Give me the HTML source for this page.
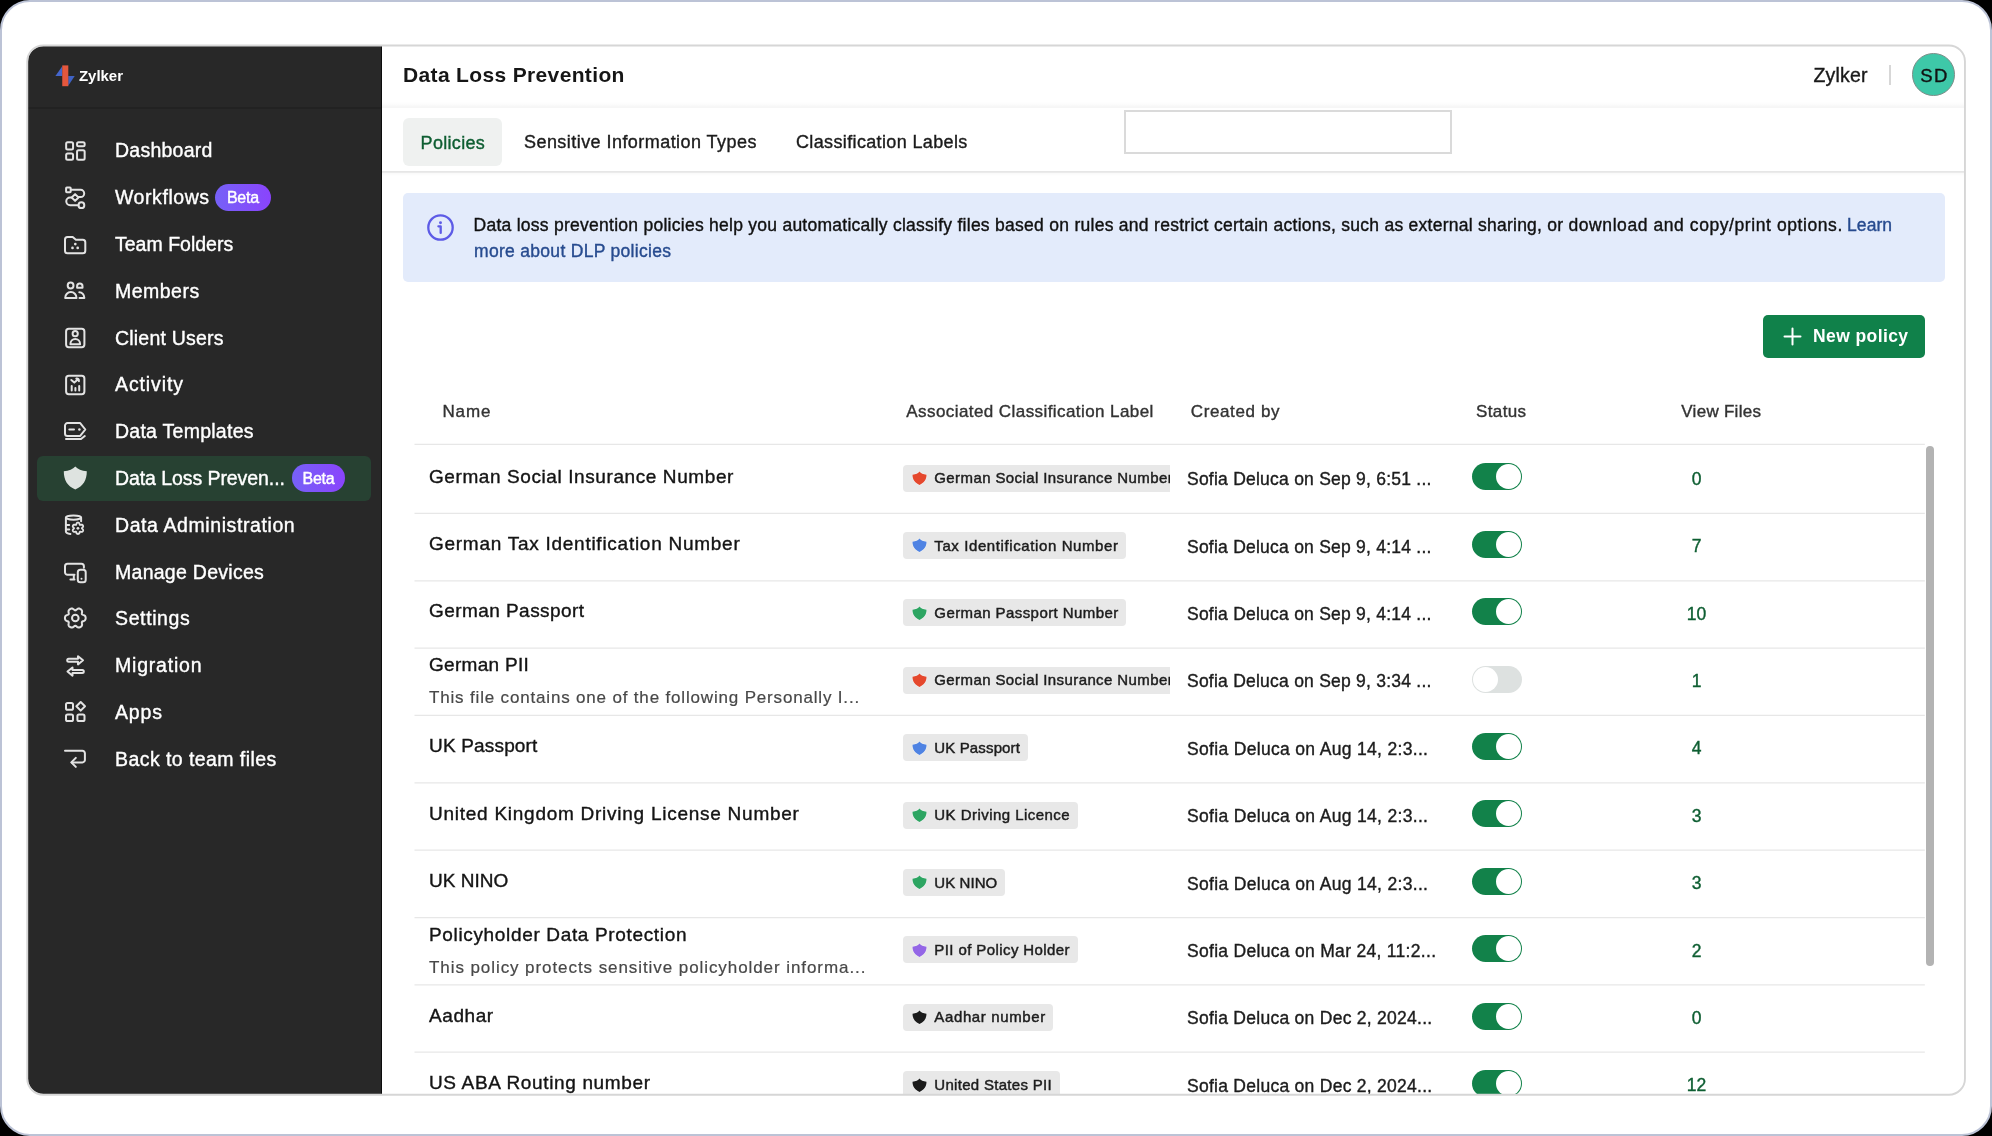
<!DOCTYPE html>
<html lang="en"><head><meta charset="utf-8"><title>Data Loss Prevention</title>
<style>
*{box-sizing:border-box;margin:0;padding:0}
html,body{width:1992px;height:1136px;overflow:hidden;background:#000}
body{font-family:"Liberation Sans",sans-serif;color:#1a1a1a;position:relative}
.frame{position:absolute;left:0;top:0;width:1992px;height:1136px;background:#fff;border:2px solid #bcc3d6;border-radius:30px;overflow:hidden}
.win{position:absolute;left:26px;top:44px;width:1937px;height:1048px;border:0;border-radius:15.5px;overflow:hidden;background:#fff}
.pg{will-change:transform;position:absolute;left:-28px;top:-46px;width:1992px;height:1136px}
.pg div{position:absolute;white-space:nowrap}
.side{left:28px;top:45px;width:353.5px;height:1051px;background:#282828}
.main{left:381.5px;top:45px;width:1584px;height:1051px;background:#fff}
/* sidebar */
.logo{left:55.2px;top:63.8px;width:20px;height:23px}
.brand{color:#fff}
.sidediv{left:28px;top:107px;width:353.5px;height:1.5px;background:#222}
.navicon{left:63px;width:24px;height:24px}
.navicon svg{display:block;width:24px;height:24px}
.navtext{color:#fff}
.navactive{left:37px;top:456px;width:334px;height:45px;border-radius:6px;background:#274132}
.beta{height:27.3px;border-radius:14px;background:linear-gradient(90deg,#7661f7,#8a44fc)}
/* header */
.title{color:#161616}
.org{color:#1a1a1a}
.orgdiv{left:1889px;top:65px;width:2px;height:20px;background:#d7d7d7}
.avatar{left:1912px;top:53.3px;width:42.7px;height:42.7px;border-radius:50%;background:#3ec8a8;border:1px solid #7f8d89}
.hline1{left:382px;top:100.5px;width:1584px;height:7px;background:linear-gradient(to bottom,rgba(0,0,0,0),rgba(0,0,0,.008) 40%,rgba(0,0,0,.04) 92%,rgba(0,0,0,.015))}
.hline2{left:382px;top:171.4px;width:1584px;height:5px;background:linear-gradient(to bottom,rgba(0,0,0,.1) 0,rgba(0,0,0,.09) 28%,rgba(0,0,0,.025) 40%,rgba(0,0,0,0))}
.tab{left:403.3px;top:118.1px;width:98.3px;height:48.2px;border-radius:6px;background:#eff1f0}
.ghost{left:1124px;top:110px;width:328px;height:44px;border:2px solid #dadada;background:#fff}
/* banner */
.banner{left:403px;top:193.4px;width:1541.6px;height:89px;border-radius:5px;background:#e3ebfb}
.binfo{left:426.8px;top:213.8px;width:27px;height:27px}
/* button */
.newbtn{left:1763.2px;top:314.7px;width:162.3px;height:43.2px;border-radius:5px;background:#10814a}
.newbtn svg{position:absolute;left:20.2px;top:12.2px;width:19px;height:19px}
/* table */
.th{color:#333}
.rowline{left:414px;width:1511px;height:1.2px;background:#e9e9e9}
.rname{color:#141414}
.rdesc{color:#484848}
.chip{left:903px;height:27px;border-radius:4px;background:#e8e8e8}
.chip svg{position:absolute;left:8.6px;top:6.5px;width:15px;height:14.5px}
.chiplong{border-radius:4px 0 0 4px}
.rby{color:#1c1c1c}
.tog{left:1471.5px;width:50.5px;height:27px;border-radius:14px}
.tog.on{background:#12824a}
.tog.off{background:#dde1e0}
.tog i{position:absolute;top:1px;width:25px;height:25px;border-radius:50%;background:#fff}
.tog.on i{right:1px}
.tog.off i{left:1px}
.rcnt{width:61px;text-align:center;color:#0e5e32}
.scroll{left:1926px;top:446px;width:8px;height:520px;border-radius:4px;background:#b3b3b3}
/* v2 additions */
.betat{color:#fff}
.avt{color:#111}
.tabt{color:#1c1c1c}
.tabt.g{color:#0e5e32}
.bt{color:#111}
.bt.lnk{color:#274b8f;background:#e3ebfb}
.btnt{color:#fff}
.chipt{color:#1c1c1c}
.chipclip{left:934.3px;width:235.6px;height:20px;overflow:hidden;font-size:15px;line-height:20px;color:#1c1c1c}

.winb{position:absolute;left:23px;top:41px}
.sideedge{left:380.8px;top:45px;width:1.1px;height:1051px;background:#0c0c0c}
.pg div{-webkit-text-stroke:.38px currentColor}
.pg .chipt,.pg .chipclip{-webkit-text-stroke:.45px #1c1c1c}
.pg .betat{-webkit-text-stroke:.4px #fff}
.pg .title,.pg .btnt,.pg .brand{-webkit-text-stroke:0}
.rl{position:absolute;left:0;top:0}
.pg .rdesc{-webkit-text-stroke:.2px currentColor}

</style></head>
<body>
<div class="frame">
<div class="win"><div class="pg">
<div class="side"></div>
<div class="logo"><svg viewBox="0 0 20 23" width="20" height="23"><path d="M.4 11.900L7.300 2.300v9.600z" fill="#4566cc"/><path d="M19.700 12.100L13.200 21.800v-9.700z" fill="#3f62c4"/><rect x="7.250" y="1.400" width="6.050" height="20.800" fill="#e5573d"/></svg></div>
<div class="brand" style="left:79.00px;top:66.60px;font-size:15px;line-height:18px;font-weight:700;letter-spacing:-0.041px;">Zylker</div>
<div class="sidediv"></div>
<div class="navicon" style="top:139.00px"><svg viewBox="0 0 24 24" fill="none" stroke="#e3e3e3" stroke-width="2" stroke-linecap="round" stroke-linejoin="round"><rect x="3.15" y="3.25" width="6.9" height="7.3" rx="1.500"/><rect x="14.05" y="3.25" width="7.6" height="4.1" rx="1.500"/><rect x="3.15" y="14.55" width="6.9" height="6.2" rx="1.500"/><rect x="14.05" y="11.35" width="7.6" height="9.4" rx="1.500"/></svg></div>
<div class="navtext" style="left:115.00px;top:135.40px;font-size:19.5px;line-height:30px;letter-spacing:0.237px;">Dashboard</div>
<div class="navicon" style="top:185.50px"><svg viewBox="0 0 24 24" fill="none" stroke="#e3e3e3" stroke-width="2" stroke-linecap="round" stroke-linejoin="round"><rect x="3.1" y="1.5" width="4.6" height="4.700" rx=".7"/><path d="M7.8 3.85H17.6a3.600 3.600 0 0 1 0 7.200H15.800"/><path d="M8.300 11.500H7.100a3.850 3.850 0 0 0 0 7.700H15.400"/><path d="M12.100 8.100l3.400 3.400-3.400 3.400-3.400-3.400z"/><circle cx="18.400" cy="19.200" r="2.900"/></svg></div>
<div class="navtext" style="left:115.00px;top:182.20px;font-size:19.5px;line-height:30px;letter-spacing:0.565px;">Workflows</div>
<div class="beta" style="left:215.2px;top:183.60px;width:55.5px"></div>
<div class="betat" style="left:226.90px;top:187.90px;font-size:16px;line-height:20px;letter-spacing:-0.207px;">Beta</div>
<div class="navicon" style="top:232.60px"><svg viewBox="0 0 24 24" fill="none" stroke="#e3e3e3" stroke-width="2" stroke-linecap="round" stroke-linejoin="round"><path d="M2 6.500a2.500 2.500 0 0 1 2.500-2.500h5.200l3.200 2.700h6.900a2.500 2.500 0 0 1 2.500 2.500v8.600a2.500 2.500 0 0 1-2.500 2.500h-15.300a2.500 2.500 0 0 1-2.500-2.500z"/><g fill="#e3e3e3" stroke="none"><circle cx="12.300" cy="11.100" r="1.350"/><circle cx="9.500" cy="14.900" r="1.350"/><circle cx="14.700" cy="14.900" r="1.350"/></g></svg></div>
<div class="navtext" style="left:115.00px;top:229.00px;font-size:19.5px;line-height:30px;letter-spacing:0.007px;">Team Folders</div>
<div class="navicon" style="top:279.40px"><svg viewBox="0 0 24 24" fill="none" stroke="#e3e3e3" stroke-width="2" stroke-linecap="round" stroke-linejoin="round"><circle cx="7.600" cy="6.500" r="2.900"/><path d="M2.200 18.900a5.650 5.800 0 0 1 11.300 0z"/><path d="M14.100 8.800v-1.600a2.700 2.700 0 0 1 5.400 0v1.600z"/><path d="M16.300 13.200a5 5.500 0 0 1 5 5.500v.2h-4.800"/></svg></div>
<div class="navtext" style="left:115.00px;top:275.80px;font-size:19.5px;line-height:30px;letter-spacing:0.486px;">Members</div>
<div class="navicon" style="top:326.40px"><svg viewBox="0 0 24 24" fill="none" stroke="#e3e3e3" stroke-width="2" stroke-linecap="round" stroke-linejoin="round"><rect x="3.100" y="2.800" width="18.300" height="18.400" rx="2.700"/><circle cx="12.200" cy="7.700" r="2.600"/><path d="M7.400 18.200a4.850 5.200 0 0 1 9.700 0z"/></svg></div>
<div class="navtext" style="left:115.00px;top:322.60px;font-size:19.5px;line-height:30px;letter-spacing:0.200px;">Client Users</div>
<div class="navicon" style="top:372.90px"><svg viewBox="0 0 24 24" fill="none" stroke="#e3e3e3" stroke-width="2" stroke-linecap="round" stroke-linejoin="round"><rect x="3.100" y="2.800" width="18.300" height="18.400" rx="2.700"/><path d="M8.700 17.600v-4.500M12.400 17.600v-2.500M16.200 17.600v-4.700"/><path d="M8.300 7l3 2.600 3.900-3.300M13.300 5.600c1.700-.3 2.800.6 2.600 2.600"/></svg></div>
<div class="navtext" style="left:115.00px;top:369.40px;font-size:19.5px;line-height:30px;letter-spacing:0.891px;">Activity</div>
<div class="navicon" style="top:419.10px"><svg viewBox="0 0 24 24" fill="none" stroke="#e3e3e3" stroke-width="2" stroke-linecap="round" stroke-linejoin="round"><path d="M4.500 4.100h12.700l5.100 6.400-5.100 6.400h-12.700a2.500 2.500 0 0 1-2.500-2.500v-7.800a2.500 2.500 0 0 1 2.500-2.500z"/><path d="M6.300 10.500h4.700"/><circle cx="16.400" cy="10.500" r="1.250" fill="#e3e3e3" stroke="none"/><path d="M3 20h15l3.800-3"/></svg></div>
<div class="navtext" style="left:115.00px;top:416.20px;font-size:19.5px;line-height:30px;letter-spacing:0.258px;">Data Templates</div>
<div class="navactive"></div>
<div class="navicon" style="top:466.35px"><svg viewBox="0 0 24 24"><path d="M12.300 .5Q8.700 4.700 .8 5.300C.8 14.200 4.300 20 12.300 23.500C20.300 20 23.800 14.200 23.800 5.300Q15.900 4.700 12.300 .5z" fill="#dee3e0"/></svg></div>
<div class="navtext" style="left:115.00px;top:463.00px;font-size:19.5px;line-height:30px;letter-spacing:-0.076px;">Data Loss Preven...</div>
<div class="beta" style="left:292.1px;top:464.40px;width:52.8px"></div>
<div class="betat" style="left:302.45px;top:468.70px;font-size:16px;line-height:20px;letter-spacing:-0.207px;">Beta</div>
<div class="navicon" style="top:512.90px"><svg viewBox="0 0 24 24" fill="none" stroke="#e3e3e3" stroke-width="2" stroke-linecap="round" stroke-linejoin="round"><ellipse cx="10.500" cy="4.550" rx="7.600" ry="2.100"/><path d="M2.900 4.700V18.600c0 1.300 1.700 2.100 4.500 2.300"/><path d="M18.100 4.700V8.200"/><path d="M3 11.900h3.200M3 16.500h3.200"/><path d="M18.84 15.30L19.05 15.66L19.53 16.11L19.99 16.65L20.19 17.20L20.12 17.71L19.91 18.16L19.63 18.57L19.22 18.87L18.64 18.98L17.94 18.86L17.31 18.66L16.90 18.66L16.69 19.02L16.55 19.66L16.31 20.33L15.93 20.78L15.46 20.97L14.96 21.02L14.46 20.97L13.99 20.78L13.61 20.33L13.37 19.66L13.23 19.02L13.02 18.66L12.61 18.66L11.98 18.86L11.28 18.98L10.70 18.87L10.29 18.57L10.01 18.16L9.80 17.71L9.73 17.20L9.93 16.65L10.39 16.11L10.87 15.66L11.08 15.30L10.87 14.94L10.39 14.49L9.93 13.95L9.73 13.40L9.80 12.89L10.01 12.44L10.29 12.03L10.70 11.73L11.28 11.62L11.98 11.74L12.61 11.94L13.02 11.94L13.23 11.58L13.37 10.94L13.61 10.27L13.99 9.82L14.46 9.63L14.96 9.58L15.46 9.63L15.93 9.82L16.31 10.27L16.55 10.94L16.69 11.58L16.90 11.94L17.31 11.94L17.94 11.74L18.64 11.62L19.22 11.73L19.63 12.03L19.91 12.44L20.12 12.89L20.19 13.40L19.99 13.95L19.53 14.49L19.05 14.94z" stroke-width="1.800"/><circle cx="14.960" cy="15.300" r="1.400" fill="#e3e3e3" stroke="none"/></svg></div>
<div class="navtext" style="left:115.00px;top:509.80px;font-size:19.5px;line-height:30px;letter-spacing:0.589px;">Data Administration</div>
<div class="navicon" style="top:560.95px"><svg viewBox="0 0 24 24" fill="none" stroke="#e3e3e3" stroke-width="2" stroke-linecap="round" stroke-linejoin="round"><path d="M20.900 6.800V5.250a2.500 2.500 0 0 0-2.500-2.500H4.500a2.500 2.500 0 0 0-2.500 2.500v6.100a2.500 2.500 0 0 0 2.500 2.500h7"/><path d="M7.400 18.600h4.100M10.800 14v4.500"/><rect x="14.800" y="8.800" width="7.900" height="12.400" rx="2.500"/><circle cx="18.500" cy="17.700" r="1" fill="#e3e3e3" stroke="none"/></svg></div>
<div class="navtext" style="left:115.00px;top:556.60px;font-size:19.5px;line-height:30px;letter-spacing:0.273px;">Manage Devices</div>
<div class="navicon" style="top:606.25px"><svg viewBox="0 0 24 24" fill="none" stroke="#e3e3e3" stroke-width="2" stroke-linecap="round" stroke-linejoin="round"><path d="M22.65 12.05L22.62 12.73L22.47 13.39L22.13 14.01L21.57 14.53L20.82 14.94L20.01 15.24L19.33 15.52L18.93 15.88L18.82 16.41L18.92 17.13L19.06 17.98L19.09 18.84L18.91 19.59L18.54 20.19L18.04 20.65L17.48 21.02L16.87 21.32L16.22 21.52L15.52 21.54L14.78 21.32L14.05 20.87L13.39 20.32L12.81 19.88L12.30 19.70L11.79 19.88L11.21 20.32L10.55 20.87L9.82 21.32L9.08 21.54L8.38 21.52L7.73 21.32L7.12 21.02L6.56 20.65L6.06 20.19L5.69 19.59L5.51 18.84L5.54 17.98L5.68 17.13L5.78 16.41L5.67 15.88L5.27 15.52L4.59 15.24L3.78 14.94L3.03 14.53L2.47 14.01L2.13 13.39L1.98 12.73L1.95 12.05L1.98 11.37L2.13 10.71L2.47 10.09L3.03 9.57L3.78 9.16L4.59 8.86L5.27 8.58L5.67 8.22L5.78 7.69L5.68 6.97L5.54 6.12L5.51 5.26L5.69 4.51L6.06 3.91L6.56 3.45L7.12 3.08L7.73 2.78L8.38 2.58L9.08 2.56L9.82 2.78L10.55 3.23L11.21 3.78L11.79 4.22L12.30 4.40L12.81 4.22L13.39 3.78L14.05 3.23L14.78 2.78L15.52 2.56L16.22 2.58L16.87 2.78L17.48 3.08L18.04 3.45L18.54 3.91L18.91 4.51L19.09 5.26L19.06 6.12L18.92 6.97L18.82 7.69L18.93 8.22L19.33 8.58L20.01 8.86L20.82 9.16L21.57 9.57L22.13 10.09L22.47 10.71L22.62 11.37z"/><circle cx="12.300" cy="12.050" r="3.300"/></svg></div>
<div class="navtext" style="left:115.00px;top:603.40px;font-size:19.5px;line-height:30px;letter-spacing:0.619px;">Settings</div>
<div class="navicon" style="top:653.50px"><svg viewBox="0 0 24 24" fill="none" stroke="#e3e3e3" stroke-width="2" stroke-linecap="round" stroke-linejoin="round"><path d="M5.700 4.800H15v-2.600l5 4.100-5 4.100v-2.600H5.700a1.500 1.500 0 0 1 0-3z"/><path d="M19.300 16.100H9.500v-2.600l-5 4.100 5 4.100v-2.600H19.300a1.500 1.500 0 0 0 0-3z"/></svg></div>
<div class="navtext" style="left:115.00px;top:650.20px;font-size:19.5px;line-height:30px;letter-spacing:0.800px;">Migration</div>
<div class="navicon" style="top:700.00px"><svg viewBox="0 0 24 24" fill="none" stroke="#e3e3e3" stroke-width="2" stroke-linecap="round" stroke-linejoin="round"><rect x="3" y="3" width="7" height="6.800" rx="1.600"/><rect x="3" y="14.400" width="7" height="6.600" rx="1.600"/><rect x="14.400" y="14.400" width="7.100" height="6.600" rx="1.600"/><path d="M17.700 2l4.300 4.300-4.300 4.300-4.300-4.300z"/></svg></div>
<div class="navtext" style="left:115.00px;top:697.00px;font-size:19.5px;line-height:30px;letter-spacing:0.816px;">Apps</div>
<div class="navicon" style="top:747.40px"><svg viewBox="0 0 24 24" fill="none" stroke="#e3e3e3" stroke-width="2" stroke-linecap="round" stroke-linejoin="round"><path d="M2 3.800h17.400a2.500 2.500 0 0 1 2.500 2.500v6.600a2.500 2.500 0 0 1-2.500 2.500H8.900"/><path d="M12.800 10.900l-4.500 4.500 4.500 4.500"/></svg></div>
<div class="navtext" style="left:115.00px;top:743.80px;font-size:19.5px;line-height:30px;letter-spacing:0.429px;">Back to team files</div>
<div class="main"></div>
<div class="sideedge"></div>
<div class="title" style="left:403.00px;top:59.70px;font-size:21px;line-height:30px;font-weight:700;letter-spacing:0.351px;">Data Loss Prevention</div>
<div class="org" style="left:1813.50px;top:60.60px;font-size:19.5px;line-height:28px;letter-spacing:0.201px;">Zylker</div>
<div class="orgdiv"></div>
<div class="avatar"></div>
<div class="avt" style="left:1920.20px;top:63.60px;font-size:18.5px;line-height:24px;letter-spacing:1.597px;">SD</div>
<div class="hline1"></div>
<div class="tab"></div>
<div class="tabt g" style="left:420.60px;top:129.80px;font-size:18px;line-height:26px;letter-spacing:0.310px;">Policies</div>
<div class="tabt" style="left:524.00px;top:129.20px;font-size:18px;line-height:26px;letter-spacing:0.447px;">Sensitive Information Types</div>
<div class="tabt" style="left:796.00px;top:129.20px;font-size:18px;line-height:26px;letter-spacing:0.360px;">Classification Labels</div>
<div class="ghost"></div>
<div class="hline2"></div>
<div class="banner"></div>
<div class="binfo"><svg viewBox="0 0 27 27" width="27" height="27" fill="none" stroke="#5d5be6" stroke-width="2.300"><circle cx="13.500" cy="13.500" r="12.200"/><circle cx="13.500" cy="8.700" r="1.450" fill="#5d5be6" stroke="none"/><path d="M11.400 12.300h2.300v6.600" stroke-linecap="round" stroke-linejoin="round"/></svg></div>
<div class="bt" style="left:473.60px;top:211.90px;font-size:17.5px;line-height:27px;letter-spacing:0.260px;white-space:pre;">Data loss prevention policies help you </div>
<div class="bt" style="left:782.40px;top:211.90px;font-size:17.5px;line-height:27px;letter-spacing:0.255px;white-space:pre;">automatically classify files </div>
<div class="bt" style="left:995.00px;top:211.90px;font-size:17.5px;line-height:27px;letter-spacing:0.279px;white-space:pre;">based on rules and restrict </div>
<div class="bt" style="left:1213.90px;top:211.90px;font-size:17.5px;line-height:27px;letter-spacing:0.279px;white-space:pre;">certain actions, such as </div>
<div class="bt" style="left:1408.60px;top:211.90px;font-size:17.5px;line-height:27px;letter-spacing:0.249px;white-space:pre;">external sharing, or </div>
<div class="bt" style="left:1568.50px;top:211.90px;font-size:17.5px;line-height:27px;letter-spacing:0.576px;white-space:pre;">download and copy/print </div>
<div class="bt" style="left:1776.90px;top:211.90px;font-size:17.5px;line-height:27px;letter-spacing:0.586px;">options.</div>
<div class="bt lnk" style="left:1847.10px;top:211.90px;font-size:17.5px;line-height:27px;letter-spacing:0.034px;">Learn</div>
<div class="bt lnk" style="left:474.00px;top:238.20px;font-size:17.5px;line-height:27px;letter-spacing:0.303px;">more about DLP policies</div>
<div class="newbtn"><svg viewBox="0 0 19 19" fill="none" stroke="#fff" stroke-width="2" stroke-linecap="round"><path d="M9.500 1.500v16M1.500 9.500h16"/></svg></div>
<div class="btnt" style="left:1813.00px;top:324.20px;font-size:17.5px;line-height:24px;font-weight:700;letter-spacing:0.409px;">New policy</div>
<div class="th" style="left:442.50px;top:399.20px;font-size:17px;line-height:26px;letter-spacing:0.847px;">Name</div>
<div class="th" style="left:906.30px;top:399.20px;font-size:17px;line-height:26px;letter-spacing:0.425px;">Associated Classification Label</div>
<div class="th" style="left:1190.80px;top:399.20px;font-size:17px;line-height:26px;letter-spacing:0.614px;">Created by</div>
<div class="th" style="left:1476.00px;top:399.20px;font-size:17px;line-height:26px;letter-spacing:0.379px;">Status</div>
<div class="th" style="left:1681.30px;top:399.20px;font-size:17px;line-height:26px;letter-spacing:0.272px;">View Files</div>
<svg class="rl" width="1992" height="1136" viewBox="0 0 1992 1136"><path d="M414.5 444.40H1924.800M414.5 513.40H1924.800M414.5 580.75H1924.800M414.5 648.10H1924.800M414.5 715.45H1924.800M414.5 782.80H1924.800M414.5 850.15H1924.800M414.5 917.50H1924.800M414.5 984.85H1924.800M414.5 1052.20H1924.800" fill="none" stroke="#e7e7e7" stroke-width="1.250"/></svg>
<div class="rname" style="left:429.00px;top:463.50px;font-size:19px;line-height:26px;letter-spacing:0.591px;">German Social Insurance Number</div>
<div class="chip chiplong" style="top:464.50px;width:267px"><svg viewBox="-.5 -.5 15 14.500"><path d="M7 0Q5 2.700 0 3.300C0 8 2.300 11.300 7 13.500C11.700 11.300 14 8 14 3.300Q9 2.700 7 0z" fill="#e5482d" stroke="#f3f6f8" stroke-width=".7" paint-order="stroke fill"/></svg></div>
<div class="chipclip" style="top:468.20px"><span style="letter-spacing:0.401px">German Social Insurance Number</span></div>
<div class="rby" style="left:1187.00px;top:466.10px;font-size:17.5px;line-height:26px;letter-spacing:0.234px;">Sofia Deluca on Sep 9, 6:51 ...</div>
<div class="tog on" style="top:463.40px"><i></i></div>
<div class="rcnt" style="left:1666.00px;top:466.80px;font-size:17.5px;line-height:24px;">0</div>
<div class="rname" style="left:429.00px;top:530.90px;font-size:19px;line-height:26px;letter-spacing:0.734px;">German Tax Identification Number</div>
<div class="chip" style="top:531.90px;width:222.90px"><svg viewBox="-.5 -.5 15 14.500"><path d="M7 0Q5 2.700 0 3.300C0 8 2.300 11.300 7 13.500C11.700 11.300 14 8 14 3.300Q9 2.700 7 0z" fill="#4f83e3" stroke="#f3f6f8" stroke-width=".7" paint-order="stroke fill"/></svg></div>
<div class="chipt" style="left:934.30px;top:535.60px;font-size:15px;line-height:20px;letter-spacing:0.602px;">Tax Identification Number</div>
<div class="rby" style="left:1187.00px;top:533.50px;font-size:17.5px;line-height:26px;letter-spacing:0.234px;">Sofia Deluca on Sep 9, 4:14 ...</div>
<div class="tog on" style="top:530.80px"><i></i></div>
<div class="rcnt" style="left:1666.00px;top:534.20px;font-size:17.5px;line-height:24px;">7</div>
<div class="rname" style="left:429.00px;top:598.30px;font-size:19px;line-height:26px;letter-spacing:0.442px;">German Passport</div>
<div class="chip" style="top:599.30px;width:223.10px"><svg viewBox="-.5 -.5 15 14.500"><path d="M7 0Q5 2.700 0 3.300C0 8 2.300 11.300 7 13.500C11.700 11.300 14 8 14 3.300Q9 2.700 7 0z" fill="#2da562" stroke="#f3f6f8" stroke-width=".7" paint-order="stroke fill"/></svg></div>
<div class="chipt" style="left:934.30px;top:603.00px;font-size:15px;line-height:20px;letter-spacing:0.420px;">German Passport Number</div>
<div class="rby" style="left:1187.00px;top:600.90px;font-size:17.5px;line-height:26px;letter-spacing:0.234px;">Sofia Deluca on Sep 9, 4:14 ...</div>
<div class="tog on" style="top:598.20px"><i></i></div>
<div class="rcnt" style="left:1666.00px;top:601.60px;font-size:17.5px;line-height:24px;">10</div>
<div class="rname" style="left:429.00px;top:652.10px;font-size:19px;line-height:26px;letter-spacing:0.294px;">German PII</div>
<div class="rdesc" style="left:429.00px;top:685.90px;font-size:17px;line-height:24px;letter-spacing:0.827px;">This file contains one of the following Personally I...</div>
<div class="chip chiplong" style="top:666.70px;width:267px"><svg viewBox="-.5 -.5 15 14.500"><path d="M7 0Q5 2.700 0 3.300C0 8 2.300 11.300 7 13.500C11.700 11.300 14 8 14 3.300Q9 2.700 7 0z" fill="#e5482d" stroke="#f3f6f8" stroke-width=".7" paint-order="stroke fill"/></svg></div>
<div class="chipclip" style="top:670.40px"><span style="letter-spacing:0.401px">German Social Insurance Number</span></div>
<div class="rby" style="left:1187.00px;top:668.30px;font-size:17.5px;line-height:26px;letter-spacing:0.234px;">Sofia Deluca on Sep 9, 3:34 ...</div>
<div class="tog off" style="top:665.60px"><i></i></div>
<div class="rcnt" style="left:1666.00px;top:669.00px;font-size:17.5px;line-height:24px;">1</div>
<div class="rname" style="left:429.00px;top:733.10px;font-size:19px;line-height:26px;letter-spacing:0.174px;">UK Passport</div>
<div class="chip" style="top:734.10px;width:124.80px"><svg viewBox="-.5 -.5 15 14.500"><path d="M7 0Q5 2.700 0 3.300C0 8 2.300 11.300 7 13.500C11.700 11.300 14 8 14 3.300Q9 2.700 7 0z" fill="#4f83e3" stroke="#f3f6f8" stroke-width=".7" paint-order="stroke fill"/></svg></div>
<div class="chipt" style="left:934.30px;top:737.80px;font-size:15px;line-height:20px;letter-spacing:0.140px;">UK Passport</div>
<div class="rby" style="left:1187.00px;top:735.70px;font-size:17.5px;line-height:26px;letter-spacing:0.325px;">Sofia Deluca on Aug 14, 2:3...</div>
<div class="tog on" style="top:733.00px"><i></i></div>
<div class="rcnt" style="left:1666.00px;top:736.40px;font-size:17.5px;line-height:24px;">4</div>
<div class="rname" style="left:429.00px;top:800.50px;font-size:19px;line-height:26px;letter-spacing:0.741px;">United Kingdom Driving License Number</div>
<div class="chip" style="top:801.50px;width:174.50px"><svg viewBox="-.5 -.5 15 14.500"><path d="M7 0Q5 2.700 0 3.300C0 8 2.300 11.300 7 13.500C11.700 11.300 14 8 14 3.300Q9 2.700 7 0z" fill="#2da562" stroke="#f3f6f8" stroke-width=".7" paint-order="stroke fill"/></svg></div>
<div class="chipt" style="left:934.30px;top:805.20px;font-size:15px;line-height:20px;letter-spacing:0.455px;">UK Driving Licence</div>
<div class="rby" style="left:1187.00px;top:803.10px;font-size:17.5px;line-height:26px;letter-spacing:0.325px;">Sofia Deluca on Aug 14, 2:3...</div>
<div class="tog on" style="top:800.40px"><i></i></div>
<div class="rcnt" style="left:1666.00px;top:803.80px;font-size:17.5px;line-height:24px;">3</div>
<div class="rname" style="left:429.00px;top:867.90px;font-size:19px;line-height:26px;letter-spacing:0.019px;">UK NINO</div>
<div class="chip" style="top:868.90px;width:102.20px"><svg viewBox="-.5 -.5 15 14.500"><path d="M7 0Q5 2.700 0 3.300C0 8 2.300 11.300 7 13.500C11.700 11.300 14 8 14 3.300Q9 2.700 7 0z" fill="#2da562" stroke="#f3f6f8" stroke-width=".7" paint-order="stroke fill"/></svg></div>
<div class="chipt" style="left:934.30px;top:872.60px;font-size:15px;line-height:20px;letter-spacing:0.081px;">UK NINO</div>
<div class="rby" style="left:1187.00px;top:870.50px;font-size:17.5px;line-height:26px;letter-spacing:0.325px;">Sofia Deluca on Aug 14, 2:3...</div>
<div class="tog on" style="top:867.80px"><i></i></div>
<div class="rcnt" style="left:1666.00px;top:871.20px;font-size:17.5px;line-height:24px;">3</div>
<div class="rname" style="left:429.00px;top:921.70px;font-size:19px;line-height:26px;letter-spacing:0.657px;">Policyholder Data Protection</div>
<div class="rdesc" style="left:429.00px;top:955.50px;font-size:17px;line-height:24px;letter-spacing:0.925px;">This policy protects sensitive policyholder informa...</div>
<div class="chip" style="top:936.30px;width:174.50px"><svg viewBox="-.5 -.5 15 14.500"><path d="M7 0Q5 2.700 0 3.300C0 8 2.300 11.300 7 13.500C11.700 11.300 14 8 14 3.300Q9 2.700 7 0z" fill="#9466e6" stroke="#f3f6f8" stroke-width=".7" paint-order="stroke fill"/></svg></div>
<div class="chipt" style="left:934.30px;top:940.00px;font-size:15px;line-height:20px;letter-spacing:0.407px;">PII of Policy Holder</div>
<div class="rby" style="left:1187.00px;top:937.90px;font-size:17.5px;line-height:26px;letter-spacing:0.302px;">Sofia Deluca on Mar 24, 11:2...</div>
<div class="tog on" style="top:935.20px"><i></i></div>
<div class="rcnt" style="left:1666.00px;top:938.60px;font-size:17.5px;line-height:24px;">2</div>
<div class="rname" style="left:429.00px;top:1002.70px;font-size:19px;line-height:26px;letter-spacing:0.584px;">Aadhar</div>
<div class="chip" style="top:1003.70px;width:150.20px"><svg viewBox="-.5 -.5 15 14.500"><path d="M7 0Q5 2.700 0 3.300C0 8 2.300 11.300 7 13.500C11.700 11.300 14 8 14 3.300Q9 2.700 7 0z" fill="#1b1b1b" stroke="#f3f6f8" stroke-width=".7" paint-order="stroke fill"/></svg></div>
<div class="chipt" style="left:934.30px;top:1007.40px;font-size:15px;line-height:20px;letter-spacing:0.633px;">Aadhar number</div>
<div class="rby" style="left:1187.00px;top:1005.30px;font-size:17.5px;line-height:26px;letter-spacing:0.270px;">Sofia Deluca on Dec 2, 2024...</div>
<div class="tog on" style="top:1002.60px"><i></i></div>
<div class="rcnt" style="left:1666.00px;top:1006.00px;font-size:17.5px;line-height:24px;">0</div>
<div class="rname" style="left:429.00px;top:1070.10px;font-size:19px;line-height:26px;letter-spacing:0.651px;">US ABA Routing number</div>
<div class="chip" style="top:1071.10px;width:156.60px"><svg viewBox="-.5 -.5 15 14.500"><path d="M7 0Q5 2.700 0 3.300C0 8 2.300 11.300 7 13.500C11.700 11.300 14 8 14 3.300Q9 2.700 7 0z" fill="#1b1b1b" stroke="#f3f6f8" stroke-width=".7" paint-order="stroke fill"/></svg></div>
<div class="chipt" style="left:934.30px;top:1074.80px;font-size:15px;line-height:20px;letter-spacing:0.302px;">United States PII</div>
<div class="rby" style="left:1187.00px;top:1072.70px;font-size:17.5px;line-height:26px;letter-spacing:0.270px;">Sofia Deluca on Dec 2, 2024...</div>
<div class="tog on" style="top:1070.00px"><i></i></div>
<div class="rcnt" style="left:1666.00px;top:1073.40px;font-size:17.5px;line-height:24px;">12</div>
<div class="scroll"></div>
</div></div>
<svg class="winb" width="1944" height="1056" viewBox="0 0 1944 1056"><rect x="2.25" y="2.5" width="1937.700" height="1049.200" rx="16" fill="none" stroke="#d6d6d6" stroke-width="1.900"/></svg>
</div>
</body></html>
